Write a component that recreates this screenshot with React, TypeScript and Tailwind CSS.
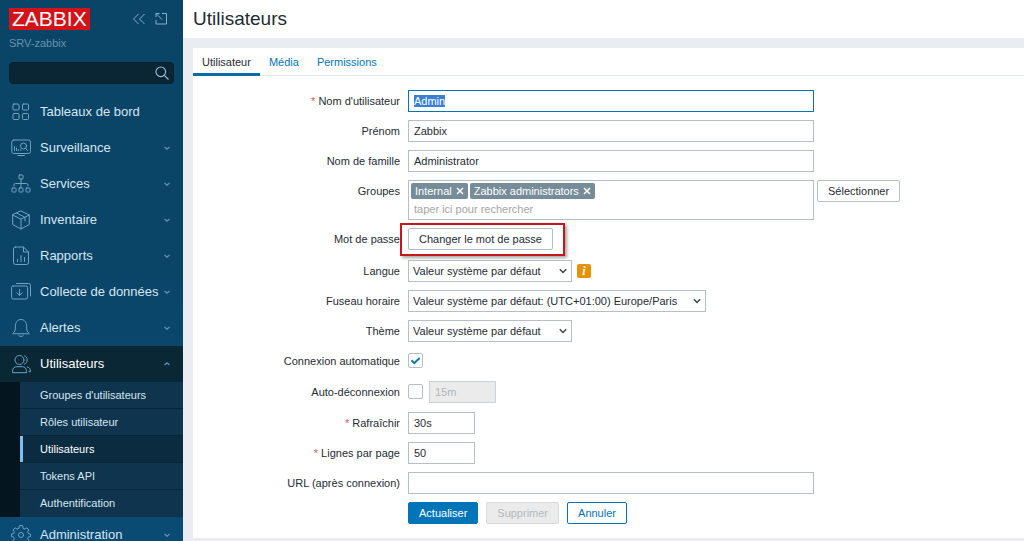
import React, { useEffect, useRef } from "react";

type IconProps = { children: React.ReactNode };

function MenuIcon({ children }: IconProps) {
  return (
    <svg
      viewBox="0 0 20 20"
      className="mr-[9px] size-5 shrink-0 text-[#6fa3c4]"
      fill="none"
      stroke="currentColor"
      strokeWidth="1"
      strokeLinecap="round"
      strokeLinejoin="round"
      aria-hidden="true"
    >
      {children}
    </svg>
  );
}

function Chevron({ up = false }: { up?: boolean }) {
  return (
    <svg viewBox="0 0 8 8" className="ml-auto size-2 shrink-0 text-[#5f93b3]" fill="none" stroke="currentColor" strokeWidth="1.2" aria-hidden="true">
      <path d={up ? "M1.5 5 4 2.8 6.5 5" : "M1.5 3 4 5.2 6.5 3"} />
    </svg>
  );
}

const icons = {
  dashboards: (
    <>
      <rect x="2" y="2" width="6" height="6" rx="1" />
      <rect x="11.5" y="2" width="6" height="6" rx="1" />
      <rect x="2" y="11.5" width="6" height="6" rx="1" />
      <rect x="11.5" y="11.5" width="6" height="6" rx="1" />
    </>
  ),
  monitoring: (
    <>
      <rect x="0.8" y="2" width="18.8" height="13.5" rx="2" />
      <path d="M7 17.5h6.5M3.5 12.5V8.5M5.5 12.5V10M7.5 12.5v-1" />
      <circle cx="12.5" cy="8" r="3" />
      <path d="m14.5 10.2 2.2 2.4M9.8 12.5v-.8" />
    </>
  ),
  services: (
    <>
      <rect x="8" y="1" width="4" height="4" rx="0.6" />
      <path d="M10 5v8.5M3 12v-1q0-1.5 1.5-1.5h11q1.5 0 1.5 1.5v1" />
      <rect x="1" y="14" width="4" height="4" rx="0.6" />
      <rect x="8" y="14" width="4" height="4" rx="0.6" />
      <rect x="15" y="14" width="4" height="4" rx="0.6" />
    </>
  ),
  inventory: (
    <>
      <path d="M10 1 18.3 5v9.5L10 19l-8.3-4.5V5zM1.7 5 10 9.2 18.3 5M10 9.2V19" />
      <path d="m5.7 3.1 8.3 4.2v3.5" />
    </>
  ),
  reports: (
    <>
      <path d="M4.5 1h8l5 5v10.5q0 2-2 2h-11q-2 0-2-2V3q0-2 2-2z" />
      <path d="M12.5 1v5h5M6.5 15.5v-2M10 15.5V9.5M13.5 15.5v-4" />
    </>
  ),
  collection: (
    <>
      <rect x="0.6" y="4" width="16" height="13" rx="1.5" />
      <path d="M5.5 1.5h12q2 0 2 2V14M8.6 7.5v5.8M6 10.8l2.6 2.6 2.6-2.6" />
    </>
  ),
  alerts: (
    <>
      <path d="M2 15.5c2-1.5 2.4-3.5 2.4-7C4.4 4 6.6 1.5 10 1.5S15.6 4 15.6 8.5c0 3.5.4 5.5 2.4 7z" />
      <path d="M7.5 17.3c1 1.6 4 1.6 5 0" />
    </>
  ),
  users: (
    <>
      <circle cx="8.5" cy="6" r="4.5" />
      <path d="M1.5 18.3v-.8c0-3.5 2-4.8 4.3-4.8h5.4c2.3 0 4.3 1.3 4.3 4.8v.8zM13.5 1.8c3.5.4 4 7-.2 8.4M16.2 12.9c2 .5 3.3 2 3.3 4.8h-1.6" />
    </>
  ),
  administration: (
    <>
      <circle cx="10" cy="10" r="2.5" />
      <path d="m8.4 1-.5 2.3-1.8.8-2-1.3-2 2.1L3.4 7l-.7 1.6-2.2.5v2.5l2.2.5.7 1.6-1.3 2 2 2.1 2-1.3 1.8.8.5 2.2h3.2l.5-2.2 1.8-.8 2 1.3 2-2.1-1.3-2 .7-1.6 2.2-.5V9.1l-2.2-.5-.7-1.6 1.3-2.1-2-2.1-2 1.3-1.8-.8L11.6 1z" />
    </>
  ),
};

const menu: { label: string; icon: keyof typeof icons; leaf?: boolean }[] = [
  { label: "Tableaux de bord", icon: "dashboards", leaf: true },
  { label: "Surveillance", icon: "monitoring" },
  { label: "Services", icon: "services" },
  { label: "Inventaire", icon: "inventory" },
  { label: "Rapports", icon: "reports" },
  { label: "Collecte de données", icon: "collection" },
  { label: "Alertes", icon: "alerts" },
];

const subMenu = ["Groupes d'utilisateurs", "Rôles utilisateur", "Utilisateurs", "Tokens API", "Authentification"];

function MenuLink({ label, icon, leaf = false, active = false }: { label: string; icon: keyof typeof icons; leaf?: boolean; active?: boolean }) {
  return (
    <a
      href="#"
      className={
        active
          ? "flex h-9 items-center bg-[#0a2736] pr-3 pl-[11px] text-[13px] leading-4 whitespace-nowrap text-white"
          : "flex h-9 items-center pr-3 pl-[11px] text-[13px] leading-4 whitespace-nowrap text-[#d5e6f0]"
      }
    >
      <MenuIcon>{icons[icon]}</MenuIcon>
      <span>{label}</span>
      {!leaf && <Chevron up={active} />}
    </a>
  );
}

function Sidebar() {
  return (
    <aside className="flex h-screen w-[183px] shrink-0 flex-col overflow-hidden bg-linear-to-b from-[#0a4568] from-50% to-[#0a4b74]">
      <div className="flex items-center pt-2 pr-[15px] pl-[9px]">
        <a href="#" className="bg-[#d31219] px-[3px] text-[21px] leading-[22px] text-white">
          ZABBIX
        </a>
        <div className="ml-auto flex gap-2 text-[#7fb0cf]">
          <button type="button" aria-label="Réduire le menu">
            <svg viewBox="0 0 14 14" className="size-3.5" fill="none" stroke="currentColor">
              <path d="M6.5 2 1.5 7l5 5M12.5 2l-5 5 5 5" />
            </svg>
          </button>
          <button type="button" aria-label="Masquer le menu">
            <svg viewBox="0 0 14 14" className="size-3.5" fill="none" stroke="currentColor">
              <path d="M8 1.5h4.5V12H2V8M8 7.5l-6-6M2 5V1.5h3.5" />
            </svg>
          </button>
        </div>
      </div>
      <div className="mt-1.5 pl-[9px] text-[11px] leading-[14px] text-[#6593ae]">SRV-zabbix</div>
      <form className="mx-[9px] mt-3 flex h-[22px] shrink-0 items-center rounded-sm border border-[#08202f] bg-[#0a2534] pr-1" role="search">
        <input type="text" aria-label="Rechercher" className="h-full min-w-0 flex-1 bg-transparent px-1 text-[11px] text-white outline-none" />
        <button type="button" aria-label="Lancer la recherche" className="text-[#a3c4d8]">
          <svg viewBox="0 0 14 14" className="size-3.5" fill="none" stroke="currentColor" strokeWidth="1.1">
            <circle cx="5.8" cy="5.8" r="4.8" />
            <path d="m9.3 9.3 4.2 4.2" />
          </svg>
        </button>
      </form>
      <nav className="mt-2.5">
        {menu.map((m) => (
          <MenuLink key={m.label} {...m} />
        ))}
        <MenuLink label="Utilisateurs" icon="users" active />
        <ul className="border-l-[20px] border-[#04151f] bg-[#0f344e]">
          {subMenu.map((s) => (
            <li key={s} className="h-[27px] border-b border-[#0a2534] last:border-b-0">
              <a
                href="#"
                className={
                  s === "Utilisateurs"
                    ? "flex h-full items-center border-l-[3px] border-[#7fc1ec] bg-[#0b2c40] pl-[17px] text-[11px] text-white"
                    : "flex h-full items-center pl-5 text-[11px] text-[#d5e6f0]"
                }
              >
                {s}
              </a>
            </li>
          ))}
        </ul>
        <MenuLink label="Administration" icon="administration" />
      </nav>
    </aside>
  );
}

const inputClass = "h-[22px] border border-[#b4bfc6] bg-white px-[5px] text-[11px] outline-none focus:border-[#0275b8]";

function Row({ label, htmlFor, required = false, children }: { label: string; htmlFor: string; required?: boolean; children: React.ReactNode }) {
  return (
    <div className="grid grid-cols-[207px_minmax(0,1fr)] gap-x-2">
      <label htmlFor={htmlFor} className="text-right leading-[22px]">
        {required && <span className="text-[#e45959]">* </span>}
        {label}
      </label>
      <div className="flex items-start">{children}</div>
    </div>
  );
}

function Select({ id, value, wide = false }: { id: string; value: string; wide?: boolean }) {
  return (
    <div className={wide ? "relative w-[298px]" : "relative w-[164px]"}>
      <select id={id} className="block h-[22px] w-full appearance-none border border-[#b4bfc6] bg-white pr-5 pl-1 text-[11px] outline-none">
        <option>{value}</option>
      </select>
      <svg viewBox="0 0 8 8" className="pointer-events-none absolute top-[7px] right-[5px] size-2" fill="none" stroke="#3c454b" strokeWidth="1.5" aria-hidden="true">
        <path d="M.8 2.3 4 5.5l3.2-3.2" />
      </svg>
    </div>
  );
}

function Tag({ children }: { children: string }) {
  return (
    <span className="flex h-4 items-center gap-1 rounded-xs bg-[#768d99] px-1 text-white">
      {children}
      <button type="button" aria-label={`Retirer ${children}`}>
        <svg viewBox="0 0 8 8" className="size-2" fill="none" stroke="currentColor" strokeWidth="1.5">
          <path d="m1 1 6 6M7 1 1 7" />
        </svg>
      </button>
    </span>
  );
}

function Checkbox({ id, checked = false }: { id: string; checked?: boolean }) {
  return (
    <span className="relative mt-[3px] size-[15px]">
      <input id={id} type="checkbox" defaultChecked={checked} className="peer block size-[15px] appearance-none rounded-xs border border-[#b4bfc6] bg-white" />
      <svg viewBox="0 0 15 15" className="pointer-events-none absolute inset-0 hidden size-[15px] peer-checked:block" fill="none" stroke="#0e7aa8" strokeWidth="2" aria-hidden="true">
        <path d="m3.5 7.3 2.8 2.8L11.7 5" />
      </svg>
    </span>
  );
}

function UserForm() {
  const username = useRef<HTMLInputElement>(null);
  useEffect(() => {
    username.current?.focus({ preventScroll: true });
    username.current?.select();
  }, []);

  return (
    <form className="flex flex-col gap-2 pt-3.5 pb-3.5">
      <Row label="Nom d'utilisateur" htmlFor="username" required>
        <input ref={username} id="username" defaultValue="Admin" className={`${inputClass} w-full max-w-[406px] selection:bg-[#3a80d2] selection:text-white`} />
      </Row>
      <Row label="Prénom" htmlFor="name">
        <input id="name" defaultValue="Zabbix" className={`${inputClass} w-full max-w-[406px]`} />
      </Row>
      <Row label="Nom de famille" htmlFor="surname">
        <input id="surname" defaultValue="Administrator" className={`${inputClass} w-full max-w-[406px]`} />
      </Row>
      <Row label="Groupes" htmlFor="groups">
        <div className="mr-[3px] w-full max-w-[406px] border border-[#b4bfc6] px-0.5 pt-0.5">
          <div className="flex gap-0.5">
            <Tag>Internal</Tag>
            <Tag>Zabbix administrators</Tag>
          </div>
          <input id="groups" placeholder="taper ici pour rechercher" className="block h-5 w-full px-[3px] outline-none placeholder:text-[#a5a5a5]" />
        </div>
        <button type="button" className="h-[22px] shrink-0 rounded-xs border border-[#b4bfc6] px-2.5">
          Sélectionner
        </button>
      </Row>
      <Row label="Mot de passe" htmlFor="password">
        <div className="relative mb-0.5">
          <button id="password" type="button" className="block h-[22px] rounded-xs border border-[#b4bfc6] px-2.5">
            Changer le mot de passe
          </button>
          <span className="pointer-events-none absolute -top-[5px] -right-3 -bottom-[6px] -left-2 border-2 border-[#c8161d] shadow-[2px_2px_3px_rgba(0,0,0,0.35)]" />
        </div>
      </Row>
      <Row label="Langue" htmlFor="lang">
        <Select id="lang" value="Valeur système par défaut" />
        <button type="button" aria-label="Information" className="mt-1 ml-[5px] size-3.5 rounded-xs bg-[#e79200] font-['Liberation_Serif',serif] text-[12px] leading-3.5 font-bold text-white italic">
          i
        </button>
      </Row>
      <Row label="Fuseau horaire" htmlFor="timezone">
        <Select id="timezone" value="Valeur système par défaut: (UTC+01:00) Europe/Paris" wide />
      </Row>
      <Row label="Thème" htmlFor="theme">
        <Select id="theme" value="Valeur système par défaut" />
      </Row>
      <Row label="Connexion automatique" htmlFor="autologin">
        <div className="flex h-[23px]">
          <Checkbox id="autologin" checked />
        </div>
      </Row>
      <Row label="Auto-déconnexion" htmlFor="autologout">
        <div className="flex h-[23px] gap-1.5">
          <Checkbox id="autologout" />
          <input aria-label="Délai de déconnexion" defaultValue="15m" disabled className="h-[22px] w-[67px] border border-[#ccd2d6] bg-[#ebebeb] px-[5px] text-[#b0b5b8]" />
        </div>
      </Row>
      <Row label="Rafraîchir" htmlFor="refresh" required>
        <input id="refresh" defaultValue="30s" className={`${inputClass} w-[67px]`} />
      </Row>
      <Row label="Lignes par page" htmlFor="rows" required>
        <input id="rows" defaultValue="50" className={`${inputClass} w-[67px]`} />
      </Row>
      <Row label="URL (après connexion)" htmlFor="url">
        <input id="url" className={`${inputClass} w-full max-w-[406px]`} />
      </Row>
      <div className="flex gap-2 pl-[215px]">
        <button type="button" className="h-[22px] rounded-xs border border-[#0275b8] bg-[#0275b8] px-2.5 text-white">
          Actualiser
        </button>
        <button type="button" disabled className="h-[22px] rounded-xs border border-[#d6dadd] bg-[#ebebeb] px-2.5 text-[#b3b8bb]">
          Supprimer
        </button>
        <button type="button" className="h-[22px] rounded-xs border border-[#0275b8] bg-white px-2.5 text-[#0275b8]">
          Annuler
        </button>
      </div>
    </form>
  );
}

export default function App() {
  return (
    <div className="flex h-screen overflow-hidden bg-[#e9ecf0] font-['Liberation_Sans',Arial,sans-serif] text-[11px] text-[#1f2c33]">
      <Sidebar />
      <main className="min-w-0 flex-1">
        <header className="bg-white px-2.5 pt-[7px] pb-[7px]">
          <h1 className="text-[19px] leading-6">Utilisateurs</h1>
        </header>
        <section className="mt-2.5 ml-2.5 bg-white">
          <nav className="flex h-7 border-b border-[#e3e8ec]">
            <a href="#" className="flex h-7 items-center border-b-[3px] border-[#0b6ba8] px-[9px] pt-[3px]">
              Utilisateur
            </a>
            <a href="#" className="flex h-7 items-center border-b-[3px] border-transparent px-[9px] pt-[3px] text-[#0275b8]">
              Média
            </a>
            <a href="#" className="flex h-7 items-center border-b-[3px] border-transparent px-[9px] pt-[3px] text-[#0275b8]">
              Permissions
            </a>
          </nav>
          <UserForm />
        </section>
      </main>
    </div>
  );
}
